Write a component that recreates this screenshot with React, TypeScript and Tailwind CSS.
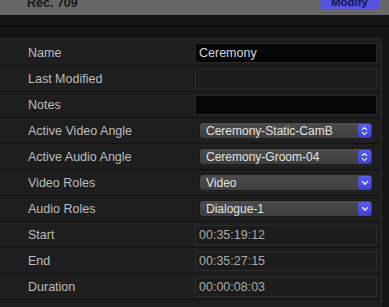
import React from 'react';

type Row =
  | { label: string; kind: 'text'; value?: string; dark?: boolean }
  | { label: string; kind: 'select'; value: string; stepper?: boolean }
  | { label: string; kind: 'time'; value: string };

const rows: Row[] = [
  { label: 'Name', kind: 'text', value: 'Ceremony', dark: true },
  { label: 'Last Modified', kind: 'text' },
  { label: 'Notes', kind: 'text', dark: true },
  { label: 'Active Video Angle', kind: 'select', value: 'Ceremony-Static-CamB', stepper: true },
  { label: 'Active Audio Angle', kind: 'select', value: 'Ceremony-Groom-04', stepper: true },
  { label: 'Video Roles', kind: 'select', value: 'Video' },
  { label: 'Audio Roles', kind: 'select', value: 'Dialogue-1' },
  { label: 'Start', kind: 'time', value: '00:35:19:12' },
  { label: 'End', kind: 'time', value: '00:35:27:15' },
  { label: 'Duration', kind: 'time', value: '00:00:08:03' },
];

const Stepper = ({ double }: { double?: boolean }) => (
  <div className="w-[13px] h-[14px] rounded-[3px] bg-gradient-to-b from-[#5a5cf0] to-[#3d3fd0] flex items-center justify-center">
    {double ? (
      <svg width="7" height="10" viewBox="0 0 7 10" fill="none" stroke="#e8e8ff" strokeWidth="1.2" strokeLinecap="round" strokeLinejoin="round">
        <path d="M1.2 3.6 L3.5 1.4 L5.8 3.6" />
        <path d="M1.2 6.4 L3.5 8.6 L5.8 6.4" />
      </svg>
    ) : (
      <svg width="8" height="6" viewBox="0 0 8 6" fill="none" stroke="#e8e8ff" strokeWidth="1.4" strokeLinecap="round" strokeLinejoin="round">
        <path d="M1.5 1.6 L4 4.2 L6.5 1.6" />
      </svg>
    )}
  </div>
);

const Field = ({ row }: { row: Row }) => {
  if (row.kind === 'select') {
    return (
      <div className="ml-[4px] mr-[4px] h-[17px] rounded-[4px] border border-[#1a1a1a] bg-gradient-to-b from-[#4c4c4c] to-[#3e3e3e] flex items-center justify-between pl-[6px] pr-[1px] shadow-[0_1px_0_#262626]">
        <span className="text-[12px] text-[#e2e2e2] leading-none">{row.value}</span>
        <Stepper double={row.stepper} />
      </div>
    );
  }
  if (row.kind === 'time') {
    return (
      <div className="h-[20px] border border-[#2c2c2c] bg-[#1c1c1c] flex items-center pl-[3px] pt-[1px]">
        <span className="text-[12.5px] text-[#a9a9a9] leading-none">{row.value}</span>
      </div>
    );
  }
  return (
    <div
      className={
        'h-[20px] border flex items-center pl-[3px] pt-[1px] ' +
        (row.dark ? 'bg-[#060606] border-[#262626]' : 'bg-[#1c1c1c] border-[#292929]')
      }
    >
      {row.value && <span className="text-[12.5px] text-[#d6d6d6] leading-none">{row.value}</span>}
    </div>
  );
};

export default function App() {
  return (
    <div
      className="w-[389px] h-[307px] bg-[#151515] overflow-hidden flex flex-col"
      style={{ fontFamily: '"Liberation Sans", Arial, sans-serif' }}
    >
      <div className="h-[15px] shrink-0 bg-[#676767] flex items-start overflow-hidden">
        <span className="ml-[27px] -mt-[5px] text-[12.5px] font-bold text-[#161616] leading-[16px]">Rec. 709</span>
        <div className="ml-auto mr-[10px] w-[59px] h-[9px] rounded-b-[3px] bg-[#5552dc] flex justify-center overflow-hidden">
          <span className="-mt-[6px] text-[11.5px] font-bold text-[#14145a] leading-[16px]">Modify</span>
        </div>
      </div>
      <div className="h-[11px] shrink-0 bg-[#161616] border-b border-[#050505]" />
      <div className="h-[12px] shrink-0 bg-[#141414]" />
      <div className="w-[382px] flex-1 bg-[#1e1e1e] border-t border-r border-[#2c2c2c] rounded-tr-[5px] pt-[1px]">
        {rows.map((row) => (
          <div key={row.label} className="h-[26px] border-b border-[#121212] flex items-center">
            <div className="w-[195px] pl-[28px] pt-[2px] text-[12.5px] text-[#bdbdbd] leading-none">{row.label}</div>
            <div className="w-[182px]">
              <Field row={row} />
            </div>
          </div>
        ))}
      </div>
    </div>
  );
}
